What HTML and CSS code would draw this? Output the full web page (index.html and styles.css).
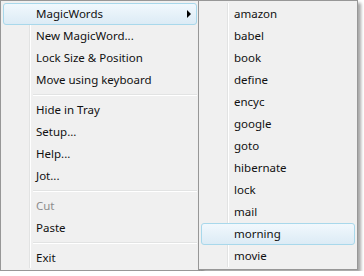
FILE: index.html
```html
<!DOCTYPE html>
<html lang="en">
<head>
    <meta charset="UTF-8">
    <title>MagicWords menu</title>
    <link rel="stylesheet" href="styles.css">
</head>
<body>
    <div class="menus">
        <ul class="menu menu-main">
            <li class="item active">MagicWords <span class="arrow"></span></li>
            <li class="item">New MagicWord...</li>
            <li class="item">Lock Size &amp; Position</li>
            <li class="item">Move using keyboard</li>
            <li class="sep"></li>
            <li class="item">Hide in Tray</li>
            <li class="item">Setup...</li>
            <li class="item">Help...</li>
            <li class="item">Jot...</li>
            <li class="sep"></li>
            <li class="item disabled">Cut</li>
            <li class="item">Paste</li>
            <li class="sep"></li>
            <li class="item">Exit</li>
        </ul>
        <ul class="menu menu-sub">
            <li class="item">amazon</li>
            <li class="item">babel</li>
            <li class="item">book</li>
            <li class="item">define</li>
            <li class="item">encyc</li>
            <li class="item">google</li>
            <li class="item">goto</li>
            <li class="item">hibernate</li>
            <li class="item">lock</li>
            <li class="item">mail</li>
            <li class="item active">morning</li>
            <li class="item">movie</li>
        </ul>
    </div>
</body>
</html>
```

FILE: styles.css
```css
:root {
    --menu-bg: #f0f0f0;
    --menu-border: #979797;
    --gutter-dark: #e2e3e3;
    --text: #111111;
    --fuente: 'Segoe UI', 'Noto Sans', 'Open Sans', sans-serif;
}

* {
    margin: 0; padding: 0; box-sizing: border-box;
}

body {
    background: #ffffff;
    font-family: var(--fuente);
    font-size: 11.5px;
    color: var(--text);
}

.menus {
    display: flex; align-items: flex-start;
}

.menu {
    list-style: none;
    position: relative;
    background-color: var(--menu-bg);
    border: 1px solid var(--menu-border);
    padding: 2px;
    box-shadow: 3px 3px 3px rgba(0, 0, 0, 0.35);
}

/* the icon gutter with its double line */
.menu::before {
    content: '';
    position: absolute; top: 2px; bottom: 2px;
    width: 1px;
    background: var(--gutter-dark);
    box-shadow: 1px 0 0 #ffffff;
}

.menu-main { width: 200px; height: 271px; }
.menu-main::before { left: 28px; }

.menu-sub { width: 160px; height: 270px; margin-left: -2px; z-index: 2; }
.menu-sub::before { left: 28px; }

.item {
    position: relative;
    height: 22px; line-height: 19px;
    padding-left: 32px;
    border: 1px solid transparent;
    border-radius: 3px;
    white-space: nowrap;
}

.item.active {
    border-color: #a8d8eb;
    background: linear-gradient(#f1f8fd, #dcebf5);
    z-index: 1;
}

.item.disabled { color: #8d8d8d; }

.sep {
    height: 8px;
    margin-left: 28px;
    position: relative;
}
.sep::after {
    content: '';
    position: absolute; left: 2px; right: 0; top: 3px;
    height: 1px;
    background: var(--gutter-dark);
    box-shadow: 0 1px 0 #ffffff;
}

.arrow {
    position: absolute; right: 5px; top: 6px;
    width: 0; height: 0;
    border-top: 4px solid transparent;
    border-bottom: 4px solid transparent;
    border-left: 4px solid #000000;
}
```
